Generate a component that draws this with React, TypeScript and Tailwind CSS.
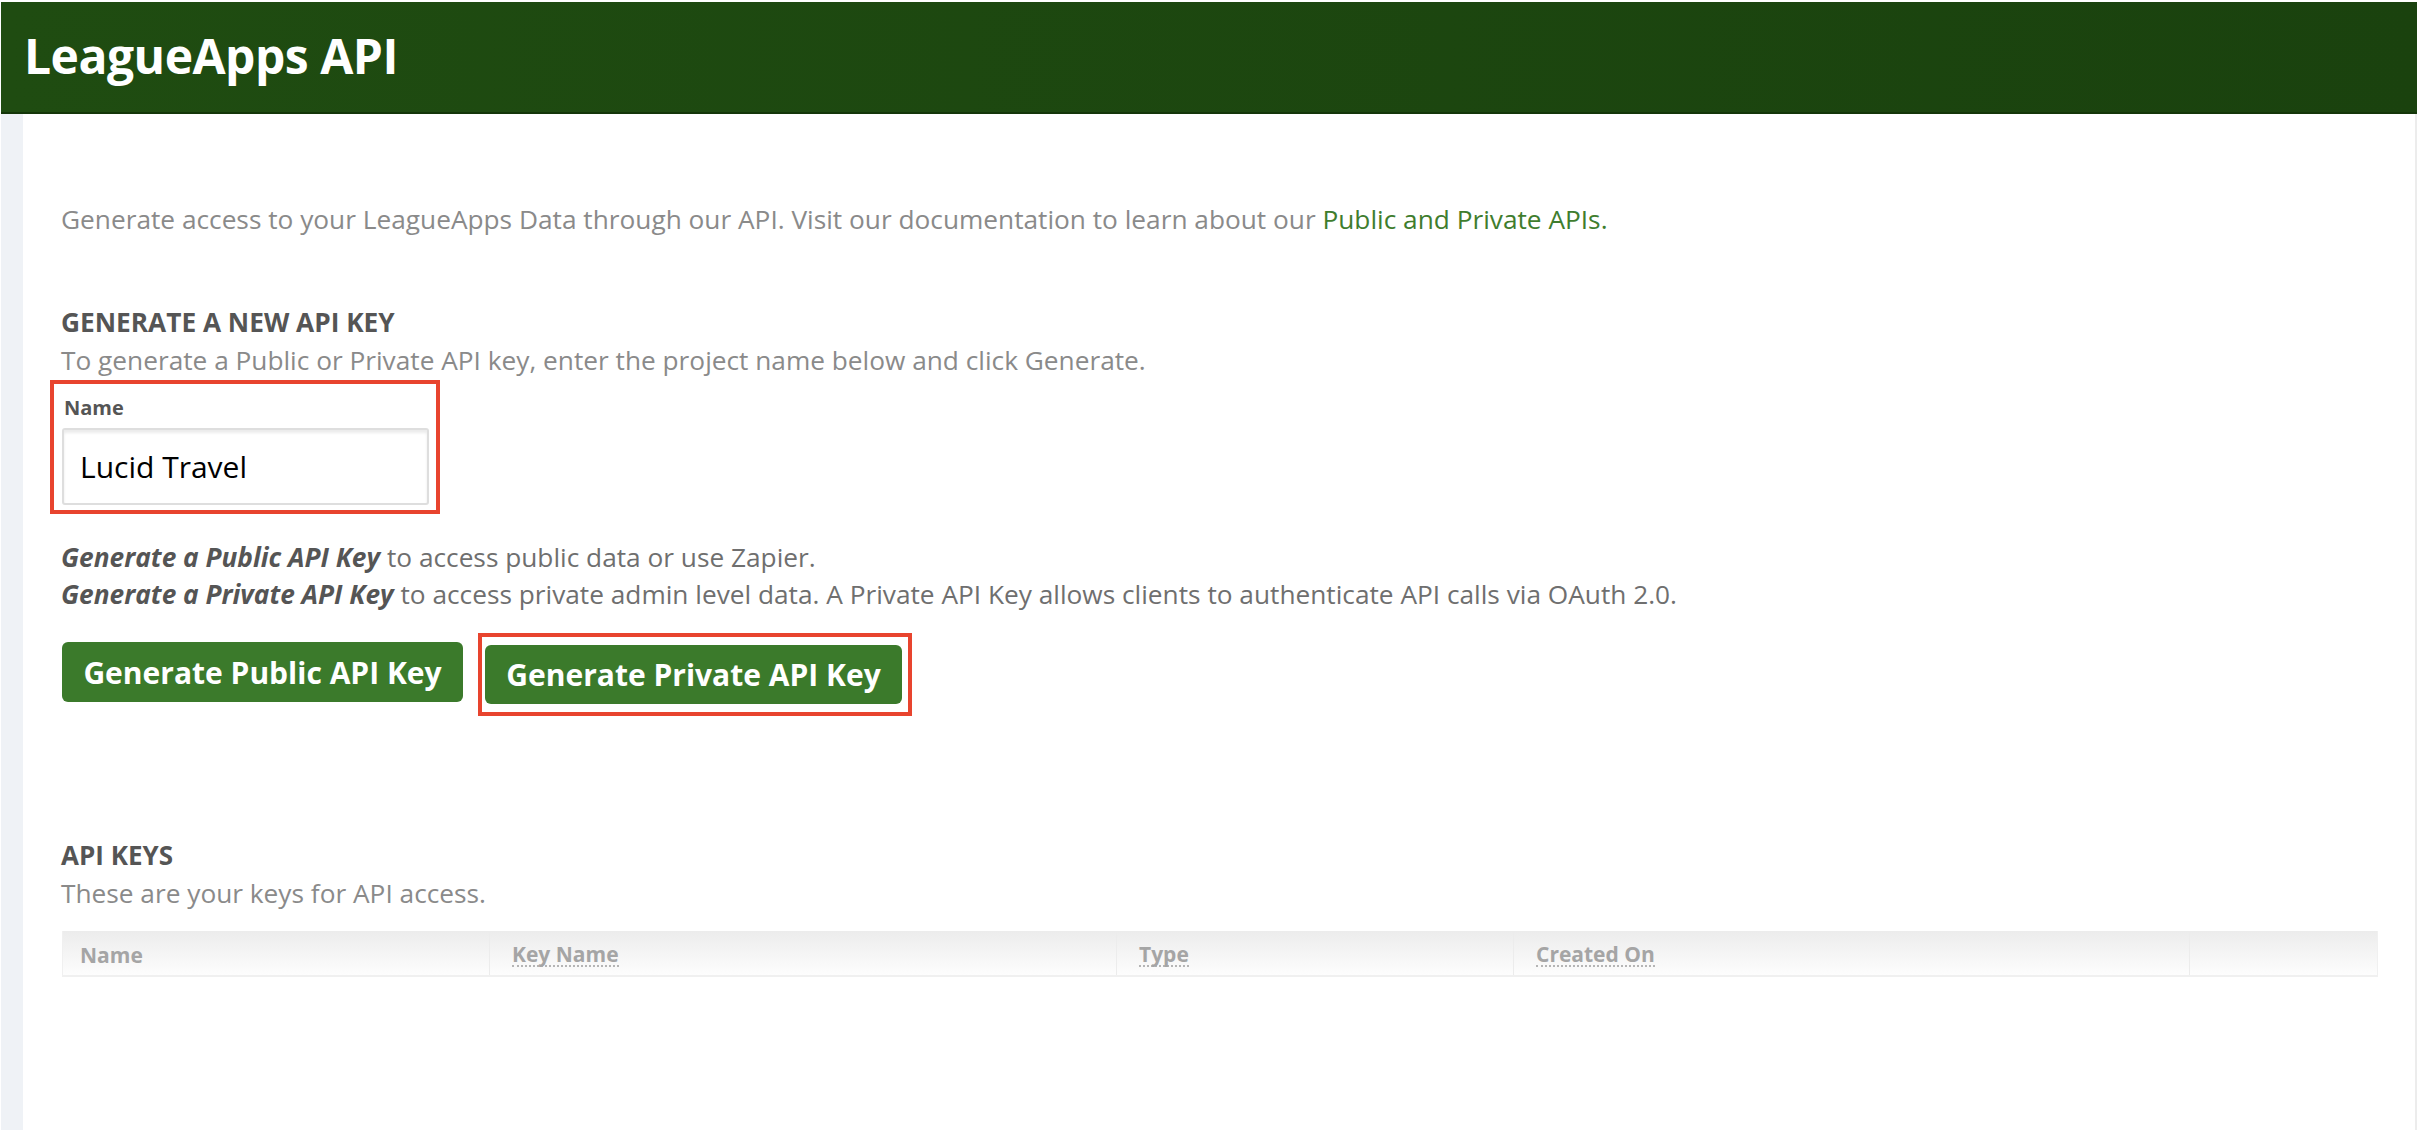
import React from 'react';

const font = "font-['Open_Sans',sans-serif]";

const columns = [
    { label: 'Name', dotted: false },
    { label: 'Key Name', dotted: true },
    { label: 'Type', dotted: true },
    { label: 'Created On', dotted: true },
    { label: '', dotted: false },
];

const App: React.FC = () => {
    return (
        <div className={`${font} flex h-[1130px] w-[2418px] flex-col overflow-hidden bg-white pt-[2px] pr-[1px] pl-[1px]`}>
            {/* Header */}
            <header className="flex h-[112px] shrink-0 items-center bg-gradient-to-r from-[#1f4c11] to-[#1a420e] pb-[4px] pl-[23px] shadow-[inset_0_-2px_0_#143609]">
                <h1 className="text-[48px] leading-[56px] font-bold tracking-[-0.5px] text-white">LeagueApps API</h1>
            </header>

            <div className="flex min-h-0 flex-1">
                <div className="w-[22px] shrink-0 bg-[#eff2f6]" />

                {/* Content */}
                <main className="flex-1 border-r-2 border-[#ececec] pl-[38px]">
                    <p className="mt-[87px] text-[26.25px] leading-[36px] text-[#8a8a8a]">
                        Generate access to your LeagueApps Data through our API. Visit our documentation to learn about our{' '}
                        <a className="text-[#3f7d2e]">Public and Private APIs.</a>
                    </p>

                    <h2 className="mt-[67px] text-[26.25px] leading-[36px] font-bold text-[#555555]">GENERATE A NEW API KEY</h2>
                    <p className="mt-[2px] text-[26.25px] leading-[36px] text-[#8a8a8a]">
                        To generate a Public or Private API key, enter the project name below and click Generate.
                    </p>

                    {/* Name field */}
                    <div className="mt-[2px] -ml-[11px] h-[134px] w-[390px] border-4 border-[#e8442e] pt-[12px] pl-[8px]">
                        <label className="block pl-[2px] text-[20px] leading-[24px] font-bold text-[#555555]">Name</label>
                        <div className="mt-[8px] flex h-[77px] w-[367px] items-center rounded-[3px] border-2 border-[#dedede] pl-[16px] text-[30px] text-black shadow-[inset_0_3px_3px_#ececec]">
                            Lucid Travel
                        </div>
                    </div>

                    <div className="mt-[25px] text-[26.25px] leading-[37px] text-[#6f6f6f]">
                        <p>
                            <strong className="font-bold italic text-[#555555]">Generate a Public API Key</strong> to access public data or use Zapier.
                        </p>
                        <p>
                            <strong className="font-bold italic text-[#555555]">Generate a Private API Key</strong> to access private admin level data. A Private API Key allows clients to authenticate API calls via OAuth 2.0.
                        </p>
                    </div>

                    {/* Actions */}
                    <div className="mt-[20px] ml-[1px] flex items-start gap-[15px]">
                        <button className="mt-[9px] h-[60px] w-[401px] rounded-[6px] bg-[#3b7a2b] text-[30px] font-bold text-white">
                            Generate Public API Key
                        </button>
                        <div className="h-[83px] w-[434px] border-4 border-[#e8442e] pt-[8px] pl-[3px]">
                            <button className="h-[59px] w-[417px] rounded-[6px] bg-[#3b7a2b] text-[30px] font-bold text-white">
                                Generate Private API Key
                            </button>
                        </div>
                    </div>

                    <h2 className="mt-[121px] text-[26px] leading-[36px] font-bold text-[#555555]">API KEYS</h2>
                    <p className="mt-[2px] text-[26.25px] leading-[36px] text-[#8a8a8a]">These are your keys for API access.</p>

                    {/* Keys table */}
                    <div className="mt-[20px] ml-[1px] grid h-[46px] w-[2316px] grid-cols-[427px_627px_397px_676px_189px] border-x border-b-2 border-[#f0f0f0] bg-gradient-to-b from-[#ececec] to-[#fdfdfd]">
                        <div className="flex items-center border-r border-[#ececec] pt-[4px] pl-[17px] text-[21px] font-bold text-[#a5a5a5]">
                            <span className="leading-[24px]">{columns[0].label}</span>
                        </div>
                        {columns.slice(1).map((col, i) => (
                            <div key={i} className={`flex items-center pt-[4px] pl-[22px] text-[21px] font-bold text-[#a5a5a5] ${i < 3 ? 'border-r border-[#ececec]' : ''}`}>
                                <span className={col.dotted ? 'border-b-2 border-dotted border-[#b5b5b5] leading-[22px]' : 'leading-[22px]'}>{col.label}</span>
                            </div>
                        ))}
                    </div>
                </main>
            </div>
        </div>
    );
};

export default App;
